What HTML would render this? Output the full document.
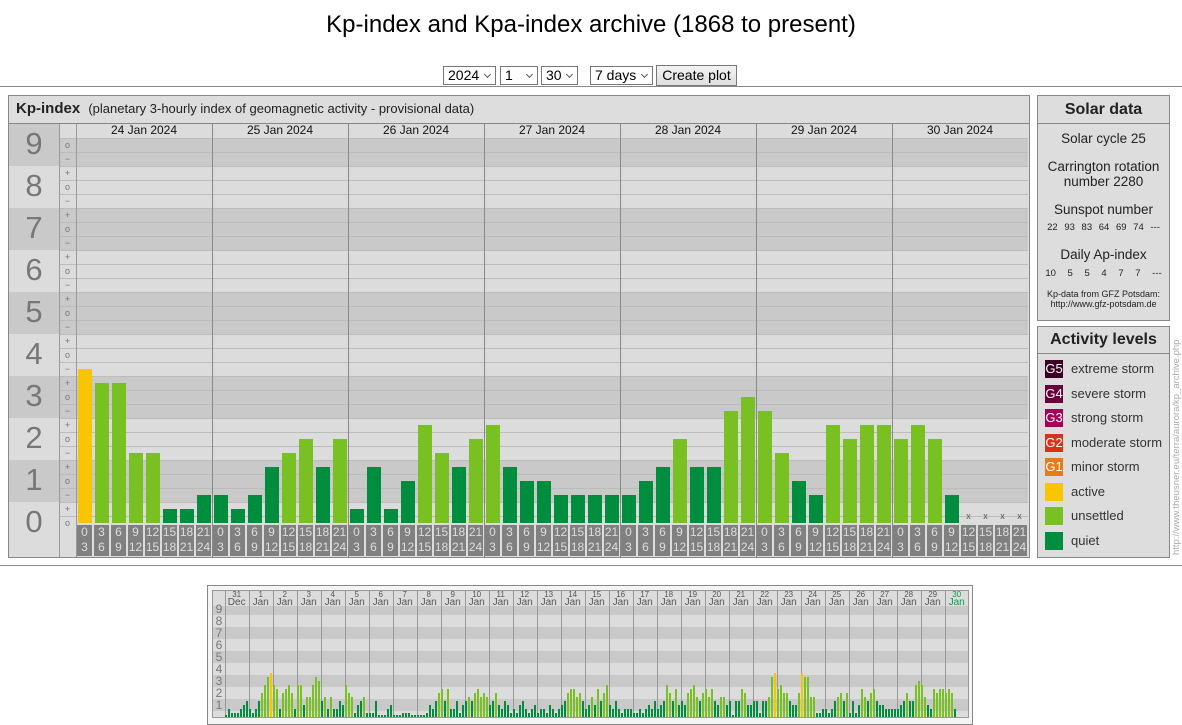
<!DOCTYPE html>
<html><head><meta charset="utf-8">
<style>
body{margin:0;background:#fff;font-family:"Liberation Sans",Arial,sans-serif;width:1182px;height:722px;overflow:hidden;position:relative}
.a{position:absolute}
h1{position:absolute;left:0;width:1182px;top:11px;margin:0;text-align:center;font-weight:normal;font-size:24px;color:#000}
.sel{position:absolute;top:66px;border:1px solid #767676;background:#fff;font-size:14px;line-height:17px;padding-left:4px;box-sizing:border-box;height:19px}
.sel:after{content:"";position:absolute;right:5px;top:5px;width:4px;height:4px;border-right:1px solid #555;border-bottom:1px solid #555;transform:rotate(45deg)}
.hr{position:absolute;left:0;width:1182px;height:1px;background:#888}
.box{position:absolute;border:1px solid #888;background:#ddd;box-sizing:border-box}
.c{text-align:center;color:#222}
</style></head><body>
<h1>Kp-index and Kpa-index archive (1868 to present)</h1>
<div class="sel" style="left:443px;width:53px">2024</div>
<div class="sel" style="left:500px;width:38px">1</div>
<div class="sel" style="left:541px;width:37px">30</div>
<div class="sel" style="left:590px;width:63px">7 days</div>
<div class="a" style="left:656px;top:65px;width:81px;height:21px;border:1px solid #777;background:linear-gradient(#f3f3f3,#dedede);box-sizing:border-box;font-size:14px;text-align:center;line-height:19px">Create plot</div>
<div class="hr" style="top:86px"></div>
<div class="hr" style="top:565px"></div>

<div class="box" style="left:8px;top:95px;width:1022px;height:463px"></div>
<div class="a" style="left:16px;top:100px;font-size:15px;font-weight:bold;color:#222">Kp-index <span style="font-weight:normal;font-size:13px;margin-left:4px">(planetary 3-hourly index of geomagnetic activity - provisional data)</span></div>
<div class="a" style="left:9px;top:123px;width:1020px;height:1px;background:#888"></div>
<div id="main" class="a" style="left:0;top:0"></div>

<div class="box" style="left:1037px;top:95px;width:133px;height:226px"></div>
<div class="a c" style="left:1037px;top:101px;width:133px;font-size:16px;font-weight:bold">Solar data</div>
<div class="a" style="left:1038px;top:123px;width:131px;height:1px;background:#888"></div>
<div class="a c" style="left:1037px;top:131px;width:133px;font-size:13.5px;line-height:15px">Solar cycle 25</div>
<div class="a c" style="left:1037px;top:160px;width:133px;font-size:13.5px;line-height:14.5px">Carrington rotation<br>number 2280</div>
<div class="a c" style="left:1037px;top:202px;width:133px;font-size:13.5px">Sunspot number</div>
<div class="a c" style="left:1037px;top:222px;width:133px;font-size:9.5px;word-spacing:4px">22 93 83 64 69 74 ---</div>
<div class="a c" style="left:1037px;top:247px;width:133px;font-size:13.5px">Daily Ap-index</div>
<div class="a c" style="left:1037px;top:268px;width:133px;font-size:9.5px;word-spacing:9px">10 5 5 4 7 7 ---</div>
<div class="a c" style="left:1037px;top:289px;width:133px;font-size:9px;line-height:10px">Kp-data from GFZ Potsdam:<br>http://www.gfz-potsdam.de</div>

<div class="box" style="left:1037px;top:326px;width:133px;height:232px"></div>
<div class="a c" style="left:1037px;top:331px;width:133px;font-size:16px;font-weight:bold">Activity levels</div>
<div class="a" style="left:1038px;top:353px;width:131px;height:1px;background:#888"></div>
<div id="leg"></div>
<div class="a" style="left:1171px;top:555px;transform-origin:0 0;transform:rotate(-90deg);font-size:9.5px;color:#aaa;white-space:nowrap">http://www.theusner.eu/terra/aurora/kp_archive.php</div>

<div class="a" style="left:207px;top:585px;width:766px;height:140px;border:1px solid #888;box-sizing:border-box;background:#f4f4f4"></div>
<div id="mini" class="a" style="left:0;top:0"></div>

<script>
(function(){
function el(p,css,txt){var d=document.createElement('div');d.className='a';d.style.cssText=css;if(txt!=null)d.innerHTML=txt;p.appendChild(d);return d;}
var M=document.getElementById('main');
var base=522.7,U=42,ty,by,pb,n,k,d,i,x,y;
for(n=0;n<=9;n++){
 ty=base-U*(n+0.5);by=base-U*(n-0.5);
 if(n==9)ty=124; if(n==0)by=557;
 var col=(n%2)?'#c9c9c9':'#dcdcdc';
 el(M,'left:9px;top:'+ty+'px;width:50px;height:'+(by-ty)+'px;background:'+col);
 el(M,'left:59px;top:'+ty+'px;width:17px;height:'+(by-ty)+'px;background:'+col);
 pb=n==0?base:by;
 el(M,'left:76px;top:'+ty+'px;width:952px;height:'+(pb-ty)+'px;background:'+col);
 el(M,'left:9px;top:'+(base-U*n-19)+'px;width:50px;text-align:center;font-size:31px;line-height:36px;color:#777',''+n);
}
el(M,'left:76px;top:'+base+'px;width:952px;height:'+(557-base)+'px;background:#dcdcdc');
el(M,'left:59px;top:124px;width:969px;height:13.7px;background:#dcdcdc');
var sym=['o','&minus;','+'];
for(k=0;k<28;k++){
 y=137.7+14*k;
 el(M,'left:59px;top:'+y+'px;width:969px;height:1px;background:#bcbcbc');
 el(M,'left:59px;top:'+(y+1)+'px;width:17px;text-align:center;font-size:9px;line-height:13px;color:#777',sym[k%3]);
}
el(M,'left:59px;top:124px;width:1px;height:433px;background:#999');
el(M,'left:76px;top:124px;width:1px;height:433px;background:#999');
var days=['24','25','26','27','28','29','30'];
for(d=0;d<7;d++){
 x=76+136*d;
 if(d>0)el(M,'left:'+x+'px;top:124px;width:1px;height:433px;background:#888');
 el(M,'left:'+x+'px;top:123px;width:136px;text-align:center;font-size:12px;line-height:14px;color:#111',days[d]+' Jan 2024');
}
var data="baa55112 21245646 14137546 74332222 23464489 85327677 6762xxxx".replace(/ /g,'');
function colr(v){return v>=11?'#f9c400':(v>=5?'#79c123':'#008e3e');}
var hrs=[0,3,6,9,12,15,18,21,24];
for(i=0;i<56;i++){
 x=76+17*i;var c=data[i],s=i%8;
 el(M,'left:'+(x+1)+'px;top:525px;width:15px;height:31px;background:#808080;color:#ddd;font-size:12px;line-height:15px;text-align:center',hrs[s]+'<br>'+hrs[s+1]);
 if(c=='x'){el(M,'left:'+x+'px;top:511px;width:17px;text-align:center;font-size:9px;color:#555','x');continue;}
 var v=parseInt(c,16),h=v*14;
 el(M,'left:'+(x+2)+'px;top:'+(base-h)+'px;width:13.7px;height:'+h+'px;background:'+colr(v));
}
var L=document.getElementById('leg');
var leg=[['#3c0022','G5','extreme storm'],['#690038','G4','severe storm'],['#a3005a','G3','strong storm'],['#d9311d','G2','moderate storm'],['#e57c17','G1','minor storm'],['#f9c400','','active'],['#79c123','','unsettled'],['#008e3e','','quiet']];
for(var j=0;j<8;j++){
 y=360+24.5*j;
 el(L,'left:1045px;top:'+y+'px;width:18px;height:18px;background:'+leg[j][0]+';color:#fff;font-size:13px;line-height:18px;text-align:center',leg[j][1]);
 el(L,'left:1071px;top:'+(y+1)+'px;font-size:13px;line-height:16px;color:#333',leg[j][2]);
}
var N=document.getElementById('mini');
var mb=717,mu=12;
el(N,'left:212px;top:590px;width:757px;height:128px;background:#dcdcdc;border:1px solid #999;box-sizing:border-box');
for(n=0;n<=9;n++){
 ty=mb-mu*(n+0.5);by=mb-mu*(n-0.5);
 if(n==9)ty=606; if(n==0)by=mb;
 el(N,'left:213px;top:'+ty+'px;width:755px;height:'+(by-ty)+'px;background:'+((n%2)?'#c9c9c9':'#dcdcdc'));
 if(n>0)el(N,'left:213px;top:'+(mb-mu*n-7)+'px;width:12px;text-align:center;font-size:12px;line-height:14px;color:#777',''+n);
}
var md="02111234 212468ab 87267862 883558a9 45252243 86513451 11400023 00011100 00013246 74722413 45467565 34632431 21342123 12213212 34677564 23537468 32421222 11212324 23486473 43678546 75743553 40447633 441445ab 78664336 baa55112 21245646 14137546 74332222 23464489 85327677 6762xxxx".replace(/ /g,'');
for(d=0;d<31;d++){
 x=224.7+24*d;
 el(N,'left:'+x+'px;top:591px;width:1px;height:126px;background:#999');
 var dd=d==0?'31':''+d, mm=d==0?'Dec':'Jan', cc=d==30?'#0a9a4a':'#555';
 el(N,'left:'+x+'px;top:591px;width:24px;text-align:center;font-size:8px;line-height:8px;color:'+cc,dd);
 el(N,'left:'+x+'px;top:598px;width:24px;text-align:center;font-size:10px;line-height:10px;color:'+cc,mm);
}
for(i=0;i<248;i++){
 var c2=md[i];if(c2=='x')continue;
 var v2=parseInt(c2,16);if(v2==0)v2=0.4;
 var h2=v2*4;
 el(N,'left:'+(225+3*i)+'px;top:'+(mb-h2)+'px;width:2px;height:'+h2+'px;background:'+colr(Math.round(v2)));
}
})();
</script>
</body></html>
